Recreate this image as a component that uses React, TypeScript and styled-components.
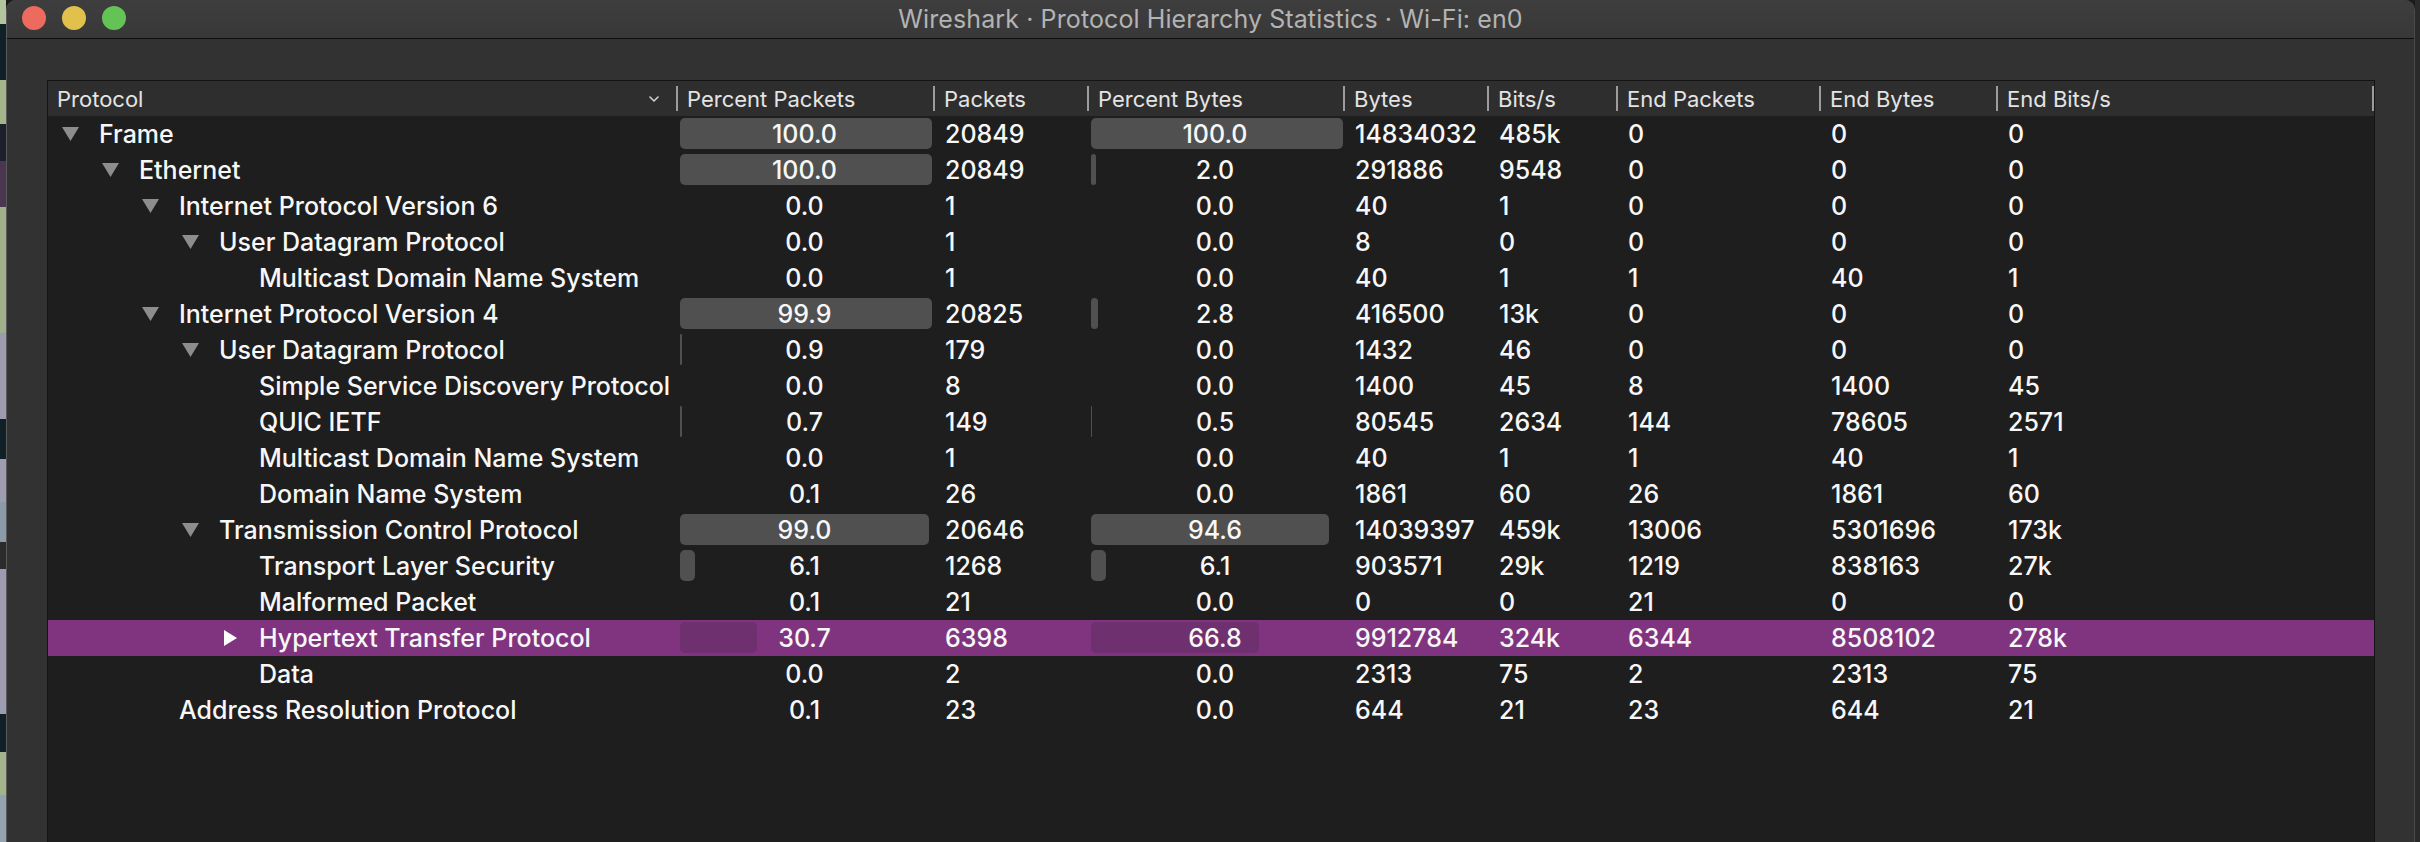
import React from 'react';
import styled, { createGlobalStyle } from 'styled-components';

const GlobalStyle = createGlobalStyle`
  html, body {
    margin: 0;
    padding: 0;
    background: #1b1b1b;
  }
  body {
    font-family: Inter, "Noto Sans", "Liberation Sans", sans-serif;
    -webkit-font-smoothing: antialiased;
  }
`;

// column widths, measured from the separators in the header
const COLUMNS = '628px 257px 154px 256px 144px 129px 203px 177px 1fr';
const BAR_MAX = 252;

type Row = {
  level: number;
  name: string;
  open?: boolean;
  pp: number;
  packets: string;
  pb: number;
  bytes: string;
  bits: string;
  endPackets: string;
  endBytes: string;
  endBits: string;
  selected?: boolean;
};

const rows: Row[] = [
  { level: 0, name: 'Frame', open: true, pp: 100.0, packets: '20849', pb: 100.0, bytes: '14834032', bits: '485k', endPackets: '0', endBytes: '0', endBits: '0' },
  { level: 1, name: 'Ethernet', open: true, pp: 100.0, packets: '20849', pb: 2.0, bytes: '291886', bits: '9548', endPackets: '0', endBytes: '0', endBits: '0' },
  { level: 2, name: 'Internet Protocol Version 6', open: true, pp: 0.0, packets: '1', pb: 0.0, bytes: '40', bits: '1', endPackets: '0', endBytes: '0', endBits: '0' },
  { level: 3, name: 'User Datagram Protocol', open: true, pp: 0.0, packets: '1', pb: 0.0, bytes: '8', bits: '0', endPackets: '0', endBytes: '0', endBits: '0' },
  { level: 4, name: 'Multicast Domain Name System', pp: 0.0, packets: '1', pb: 0.0, bytes: '40', bits: '1', endPackets: '1', endBytes: '40', endBits: '1' },
  { level: 2, name: 'Internet Protocol Version 4', open: true, pp: 99.9, packets: '20825', pb: 2.8, bytes: '416500', bits: '13k', endPackets: '0', endBytes: '0', endBits: '0' },
  { level: 3, name: 'User Datagram Protocol', open: true, pp: 0.9, packets: '179', pb: 0.0, bytes: '1432', bits: '46', endPackets: '0', endBytes: '0', endBits: '0' },
  { level: 4, name: 'Simple Service Discovery Protocol', pp: 0.0, packets: '8', pb: 0.0, bytes: '1400', bits: '45', endPackets: '8', endBytes: '1400', endBits: '45' },
  { level: 4, name: 'QUIC IETF', pp: 0.7, packets: '149', pb: 0.5, bytes: '80545', bits: '2634', endPackets: '144', endBytes: '78605', endBits: '2571' },
  { level: 4, name: 'Multicast Domain Name System', pp: 0.0, packets: '1', pb: 0.0, bytes: '40', bits: '1', endPackets: '1', endBytes: '40', endBits: '1' },
  { level: 4, name: 'Domain Name System', pp: 0.1, packets: '26', pb: 0.0, bytes: '1861', bits: '60', endPackets: '26', endBytes: '1861', endBits: '60' },
  { level: 3, name: 'Transmission Control Protocol', open: true, pp: 99.0, packets: '20646', pb: 94.6, bytes: '14039397', bits: '459k', endPackets: '13006', endBytes: '5301696', endBits: '173k' },
  { level: 4, name: 'Transport Layer Security', pp: 6.1, packets: '1268', pb: 6.1, bytes: '903571', bits: '29k', endPackets: '1219', endBytes: '838163', endBits: '27k' },
  { level: 4, name: 'Malformed Packet', pp: 0.1, packets: '21', pb: 0.0, bytes: '0', bits: '0', endPackets: '21', endBytes: '0', endBits: '0' },
  { level: 4, name: 'Hypertext Transfer Protocol', open: false, pp: 30.7, packets: '6398', pb: 66.8, bytes: '9912784', bits: '324k', endPackets: '6344', endBytes: '8508102', endBits: '278k', selected: true },
  { level: 4, name: 'Data', pp: 0.0, packets: '2', pb: 0.0, bytes: '2313', bits: '75', endPackets: '2', endBytes: '2313', endBits: '75' },
  { level: 2, name: 'Address Resolution Protocol', pp: 0.1, packets: '23', pb: 0.0, bytes: '644', bits: '21', endPackets: '23', endBytes: '644', endBits: '21' },
];

const headers = ['Percent Packets', 'Packets', 'Percent Bytes', 'Bytes', 'Bits/s', 'End Packets', 'End Bytes', 'End Bits/s'];

const Screen = styled.div`
  display: flex;
  width: 2420px;
  height: 842px;
  overflow: hidden;
`;

const DesktopEdge = styled.div`
  width: 6px;
  flex: none;
  background: linear-gradient(
    to bottom,
    #b3c59c 0 24px, #0f2027 24px 80px, #a4b58b 80px 124px, #1c1f2c 124px 161px,
    #4b3652 161px 207px, #9fb08a 207px 333px, #9c9bb0 333px 419px, #0f2027 419px 459px,
    #9d9cb1 459px 502px, #8a9aa8 502px 542px, #2b2b2e 542px 569px, #9d9cb0 569px 714px,
    #0f2027 714px 752px, #a3b38c 752px 795px, #93a3b0 795px 842px
  );
`;

const DesktopRight = styled.div`
  width: 5px;
  flex: none;
  background: #2a2a2a;
`;

const Window = styled.div`
  flex: 1;
  display: flex;
  flex-direction: column;
  background: #323232;
  border-left: 1px solid #5a5a5a;
  border-right: 1px solid #4a4a4a;
  border-top-left-radius: 10px;
  border-top-right-radius: 10px;
  overflow: hidden;
`;

const TitleBar = styled.div`
  position: relative;
  height: 38px;
  flex: none;
  display: flex;
  align-items: center;
  justify-content: center;
  background: linear-gradient(to bottom, #3f3e3e, #383838);
  border-bottom: 1px solid #0e0e0e;
`;

const Lights = styled.div`
  position: absolute;
  left: 15px;
  top: 6px;
  display: flex;
  gap: 16px;
`;

const Light = styled.span<{ $color: string }>`
  width: 24px;
  height: 24px;
  border-radius: 50%;
  background: ${(p) => p.$color};
`;

const Title = styled.div`
  font-size: 25px;
  color: #b3b3b3;
  letter-spacing: 0.1px;
`;

const Content = styled.div`
  flex: 1;
  display: flex;
  padding: 41px 39px 0 40px;
  min-height: 0;
`;

const Table = styled.div`
  flex: 1;
  display: flex;
  flex-direction: column;
  background: #1e1e1e;
  border: 1px solid #141414;
  border-bottom: none;
`;

const HeaderRow = styled.div`
  display: grid;
  grid-template-columns: ${COLUMNS};
  height: 35px;
  background: #2e2e2e;
`;

const HeaderCell = styled.div<{ $first?: boolean; $last?: boolean }>`
  position: relative;
  display: flex;
  align-items: center;
  justify-content: space-between;
  padding: 0 17px 0 ${(p) => (p.$first ? 9 : 11)}px;
  font-size: 22px;
  color: #e4e4e4;
  white-space: nowrap;

  &::before {
    content: '';
    display: ${(p) => (p.$first ? 'none' : 'block')};
    position: absolute;
    left: 0;
    top: 5px;
    bottom: 5px;
    width: 2px;
    background: #9c9c9c;
  }

  &::after {
    content: '';
    display: ${(p) => (p.$last ? 'block' : 'none')};
    position: absolute;
    right: 0;
    top: 5px;
    bottom: 5px;
    width: 2px;
    background: #9c9c9c;
  }
`;

const Body = styled.div`
  display: flex;
  flex-direction: column;
`;

const DataRow = styled.div<{ $selected?: boolean }>`
  display: grid;
  grid-template-columns: ${COLUMNS};
  height: 36px;
  align-items: stretch;
  background: ${(p) => (p.$selected ? '#803480' : 'transparent')};
  color: #f7f7f7;
  font-size: 25px;
  font-weight: 500;
`;

const ProtocolCell = styled.div<{ $level: number }>`
  display: flex;
  align-items: center;
  gap: 20px;
  padding-left: ${(p) => 14 + p.$level * 40}px;
  white-space: nowrap;
  overflow: hidden;
`;

const Toggle = styled.span`
  width: 17px;
  flex: none;
  display: flex;
  align-items: center;
  justify-content: center;
`;

const PercentCell = styled.div`
  display: grid;
  grid-template: 1fr / 1fr;
  align-items: center;
`;

const Bar = styled.div<{ $selected?: boolean }>`
  grid-area: 1 / 1;
  align-self: stretch;
  justify-self: start;
  margin: 2px 0 3px 4px;
  border-radius: 5px;
  background: ${(p) => (p.$selected ? '#6f306f' : '#505050')};
`;

const PercentValue = styled.span`
  grid-area: 1 / 1;
  justify-self: center;
`;

const NumberCell = styled.div`
  display: flex;
  align-items: center;
  padding-left: 12px;
  white-space: nowrap;
`;

const Chevron = () => (
  <svg width="10" height="6" viewBox="0 0 10 6">
    <polyline points="1,1 5,5 9,1" fill="none" stroke="#d0d0d0" strokeWidth="1.6" strokeLinecap="round" strokeLinejoin="round" />
  </svg>
);

const Arrow = ({ open, selected }: { open?: boolean; selected?: boolean }) =>
  open ? (
    <svg width="17" height="14" viewBox="0 0 17 14">
      <polygon points="0,0 17,0 8.5,14" fill="#8d8d8d" />
    </svg>
  ) : (
    <svg width="14" height="16" viewBox="0 0 14 16">
      <polygon points="0,0 13,8 0,16" fill={selected ? '#ffffff' : '#8d8d8d'} />
    </svg>
  );

const Percent = ({ value, selected }: { value: number; selected?: boolean }) => {
  const width = (value / 100) * BAR_MAX;
  return (
    <PercentCell>
      {width >= 0.5 && <Bar $selected={selected} style={{ width: Math.max(width, 1) }} />}
      <PercentValue>{value.toFixed(1)}</PercentValue>
    </PercentCell>
  );
};

export default function App() {
  return (
    <Screen>
      <GlobalStyle />
      <DesktopEdge />
      <Window>
        <TitleBar>
          <Lights>
            <Light $color="#ed6a5e" />
            <Light $color="#e1c04c" />
            <Light $color="#64c355" />
          </Lights>
          <Title>Wireshark · Protocol Hierarchy Statistics · Wi-Fi: en0</Title>
        </TitleBar>
        <Content>
          <Table>
            <HeaderRow>
              <HeaderCell $first>
                <span>Protocol</span>
                <Chevron />
              </HeaderCell>
              {headers.map((h, i) => (
                <HeaderCell key={h} $last={i === headers.length - 1}>
                  <span>{h}</span>
                </HeaderCell>
              ))}
            </HeaderRow>
            <Body>
              {rows.map((r, i) => (
                <DataRow key={i} $selected={r.selected}>
                  <ProtocolCell $level={r.level}>
                    <Toggle>{r.open !== undefined && <Arrow open={r.open} selected={r.selected} />}</Toggle>
                    <span>{r.name}</span>
                  </ProtocolCell>
                  <Percent value={r.pp} selected={r.selected} />
                  <NumberCell>{r.packets}</NumberCell>
                  <Percent value={r.pb} selected={r.selected} />
                  <NumberCell>{r.bytes}</NumberCell>
                  <NumberCell>{r.bits}</NumberCell>
                  <NumberCell>{r.endPackets}</NumberCell>
                  <NumberCell>{r.endBytes}</NumberCell>
                  <NumberCell>{r.endBits}</NumberCell>
                </DataRow>
              ))}
            </Body>
          </Table>
        </Content>
      </Window>
      <DesktopRight />
    </Screen>
  );
}
